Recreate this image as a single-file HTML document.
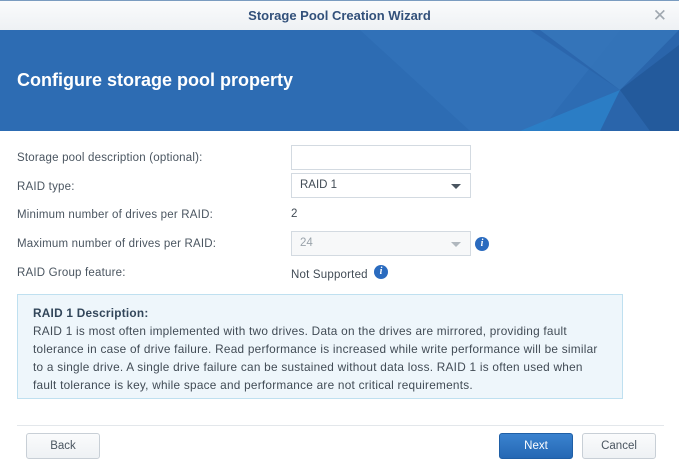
<!DOCTYPE html>
<html><head><style>
*{margin:0;padding:0;box-sizing:border-box}
body{width:679px;height:464px;overflow:hidden;background:#fff;font-family:"Liberation Sans",sans-serif;position:relative;color:#414b55}
.abs{position:absolute}
.title{left:0;top:0;width:679px;height:30px;background:linear-gradient(#fafbfc,#eef1f4);border-top:1px solid #7a9cc0;text-align:center;font-size:13px;font-weight:bold;color:#32507a;line-height:30px}
.banner{left:0;top:30px;width:679px;height:101px;background:#2d6cb3;overflow:hidden}
.banner h1{position:absolute;left:17px;top:40px;font-size:18px;color:#fff;font-weight:bold}
.lbl{left:17px;font-size:11.5px;color:#4a5560;letter-spacing:.2px}
.inp{left:291px;width:180px;height:25px;border:1px solid #d3dae1;background:#fff;font-size:11.5px;padding-left:8px;line-height:23px}
.arr{position:absolute;right:9px;top:10px;width:0;height:0;border-left:5px solid transparent;border-right:5px solid transparent;border-top:5px solid #4a5560}
.info{width:14px;height:14px;border-radius:50%;background:#2a6bbf;color:#fff;font:bold italic 10px "Liberation Serif",serif;text-align:center;line-height:14px}
.desc{left:17px;top:294px;width:606px;height:105px;background:#eef6fb;border:1px solid #bfe0f0;padding:9px 15px;font-size:11.8px;line-height:18px;color:#414b55;letter-spacing:.25px}
.btn{top:433px;height:26px;border:1px solid #c8cfd6;border-radius:3px;background:linear-gradient(#fafbfc,#eef1f4);font-size:11.5px;text-align:center;line-height:24px;color:#4a5560}
</style></head><body>
<div class="abs title">Storage Pool Creation Wizard<span style="position:absolute;right:12px;top:0;font-weight:normal;color:#a0a8b0;font-size:17px">✕</span></div>
<div class="abs banner">
<svg width="679" height="101" style="position:absolute;left:0;top:0">
<polygon points="360,0 620,0 540,101 470,101" fill="#3474ba" opacity=".6"/>
<polygon points="530,0 679,0 679,101 600,101 620,60" fill="#2a63a8" opacity=".7"/>
<polygon points="520,101 620,60 600,101" fill="#2b82c9" opacity=".8"/>
<polygon points="620,60 679,15 679,101 650,101" fill="#235a9c"/>
<polygon points="540,0 679,0 620,60" fill="#3a7dc2" opacity=".6"/>
</svg>
<h1>Configure storage pool property</h1></div>
<div class="abs lbl" style="top:152px">Storage pool description (optional):</div>
<div class="abs lbl" style="top:181px">RAID type:</div>
<div class="abs lbl" style="top:209px">Minimum number of drives per RAID:</div>
<div class="abs lbl" style="top:238px">Maximum number of drives per RAID:</div>
<div class="abs lbl" style="top:267px">RAID Group feature:</div>
<div class="abs inp" style="top:145px"></div>
<div class="abs inp" style="top:173px">RAID 1<div class="arr"></div></div>
<div class="abs" style="left:291px;top:208px;font-size:11.5px">2</div>
<div class="abs inp" style="top:231px;background:#f7f8f9;color:#9aa3ab">24<div class="arr" style="border-top-color:#b0b7be"></div></div>
<div class="abs info" style="left:475px;top:237px">i</div>
<div class="abs" style="left:291px;top:269px;font-size:11.5px;letter-spacing:.2px">Not Supported</div>
<div class="abs info" style="left:374px;top:265px">i</div>
<div class="abs desc"><b style="color:#32465a">RAID 1 Description:</b><br>RAID 1 is most often implemented with two drives. Data on the drives are mirrored, providing fault tolerance in case of drive failure. Read performance is increased while write performance will be similar to a single drive. A single drive failure can be sustained without data loss. RAID 1 is often used when fault tolerance is key, while space and performance are not critical requirements.</div>
<div class="abs" style="left:17px;top:425px;width:647px;height:1px;background:#e3e7eb"></div>
<div class="abs btn" style="left:26px;width:74px">Back</div>
<div class="abs btn" style="left:499px;width:74px;background:linear-gradient(#3a82cf,#2568b4);border-color:#1f5fa6;color:#fff">Next</div>
<div class="abs btn" style="left:582px;width:74px">Cancel</div>
</body></html>
